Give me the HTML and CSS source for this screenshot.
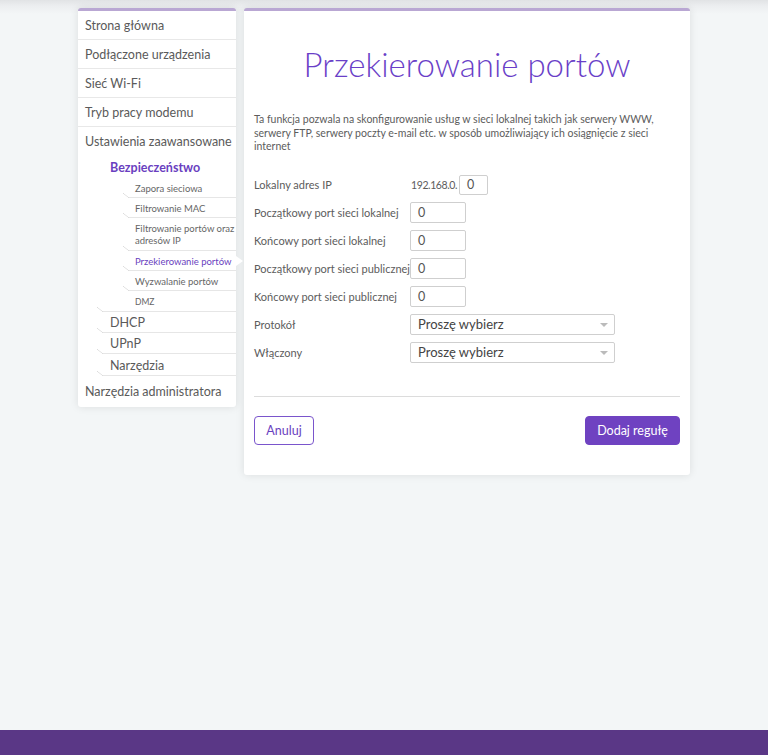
FILE: index.html
```html
<!DOCTYPE html>
<html lang="pl">
<head>
<meta charset="utf-8">
<title>Przekierowanie portów</title>
<link rel="stylesheet" href="styles.css">
</head>
<body>
<div class="page">
  <div class="layout">
    <nav class="sidebar">
      <ul class="nav">
        <li class="top">Strona główna</li>
        <li class="top">Podłączone urządzenia</li>
        <li class="top">Sieć Wi-Fi</li>
        <li class="top">Tryb pracy modemu</li>
        <li class="top noline">Ustawienia zaawansowane</li>
        <li class="sec">Bezpieczeństwo</li>
        <li class="sub">Zapora sieciowa</li>
        <li class="sub">Filtrowanie MAC</li>
        <li class="sub two">Filtrowanie portów oraz<br>adresów IP</li>
        <li class="sub active">Przekierowanie portów</li>
        <li class="sub">Wyzwalanie portów</li>
        <li class="sub dmz">DMZ</li>
        <li class="mid">DHCP</li>
        <li class="mid">UPnP</li>
        <li class="mid tall">Narzędzia</li>
        <li class="top noline last">Narzędzia administratora</li>
      </ul>
    </nav>
    <main class="card">
      <h1 class="title">Przekierowanie portów</h1>
      <p class="desc">Ta funkcja pozwala na skonfigurowanie usług w sieci lokalnej takich jak serwery WWW, serwery FTP, serwery poczty e-mail etc. w sposób umożliwiający ich osiągnięcie z sieci internet</p>
      <div class="form">
        <label class="lbl">Lokalny adres IP</label>
        <div class="ctl"><span class="prefix">192.168.0.</span><span class="inp tiny">0</span></div>
        <label class="lbl">Początkowy port sieci lokalnej</label>
        <div class="ctl"><span class="inp">0</span></div>
        <label class="lbl">Końcowy port sieci lokalnej</label>
        <div class="ctl"><span class="inp">0</span></div>
        <label class="lbl">Początkowy port sieci publicznej</label>
        <div class="ctl"><span class="inp">0</span></div>
        <label class="lbl">Końcowy port sieci publicznej</label>
        <div class="ctl"><span class="inp">0</span></div>
        <label class="lbl">Protokół</label>
        <div class="ctl"><span class="sel">Proszę wybierz<i class="caret"></i></span></div>
        <label class="lbl">Włączony</label>
        <div class="ctl"><span class="sel">Proszę wybierz<i class="caret"></i></span></div>
      </div>
      <hr class="divider">
      <div class="actions">
        <button class="btn ghost">Anuluj</button>
        <button class="btn primary">Dodaj regułę</button>
      </div>
    </main>
  </div>
  <footer class="footer"></footer>
</div>
</body>
</html>
```
FILE: styles.css
```css
* { box-sizing: border-box; }
html, body { margin: 0; padding: 0; }
body {
  font-family: Lato, "Noto Sans", "DejaVu Sans", sans-serif;
  color: #555;
  background: #f3f6f7;
}
.page {
  height: 755px;
  display: flex;
  flex-direction: column;
  background: linear-gradient(#e1e3e5 0px, #eceef0 6px, #f3f6f7 14px);
}
.layout {
  flex: 1;
  display: flex;
  align-items: flex-start;
  gap: 8px;
  padding: 8px 0 0 78px;
}
.sidebar {
  width: 158px;
  background: #fff;
  border-top: 3px solid #b9a7d3;
  border-radius: 3px;
  box-shadow: 0 0 8px rgba(0,0,0,0.10);
  position: relative;
}
.nav { list-style: none; margin: 0; padding: 0; }
.nav li { position: relative; white-space: nowrap; }
.top {
  font-size: 12.5px;
  line-height: 16px;
  padding: 7px 6px 5px 7px;
  border-bottom: 1px solid #e8e8e8;
  color: #5a5a5a;
}
.top.noline { border-bottom: none; padding-bottom: 5px; }
.top.last { padding-top: 8px; padding-bottom: 7px; }
.sec {
  font-size: 12.5px;
  line-height: 16px;
  padding: 5px 0 2px 32px;
  color: #6a3fc0;
  font-weight: 700;
}
.sub {
  font-size: 9.5px;
  line-height: 12px;
  padding: 5px 0 2px 6px;
  margin-left: 51px;
  border-bottom: 1px solid #e6e6e6;
  color: #666;
}
.sub.two { padding-bottom: 3px; }
.sub::before, .mid::before {
  content: "";
  position: absolute;
  left: -6px;
  bottom: -1px;
  width: 6px;
  height: 5px;
  background: linear-gradient(to top right, transparent calc(50% - 0.6px), #d8d8d8 50%, transparent calc(50% + 0.6px));
}
.sub.active { color: #6a3fc0; }
.sub.active::after {
  content: "";
  position: absolute;
  right: -7px;
  top: 5px;
  border-left: 7px solid #fff;
  border-top: 5px solid transparent;
  border-bottom: 5px solid transparent;
}
.sub.dmz {
  font-size: 8.5px;
  margin-left: 25px;
  padding-left: 32px;
  padding-top: 5px;
  padding-bottom: 3px;
}
.mid {
  font-size: 12.5px;
  line-height: 16px;
  padding: 3px 0 1px 7px;
  margin-left: 25px;
  border-bottom: 1px solid #e6e6e6;
  color: #5a5a5a;
}
.mid.tall { padding-top: 4px; }
.card {
  width: 446px;
  background: #fff;
  border-top: 3px solid #b9a7d3;
  border-radius: 3px;
  box-shadow: 0 0 8px rgba(0,0,0,0.10);
  padding: 0 10px 30px;
}
.title {
  margin: 33px 0 0;
  text-align: center;
  font-size: 33px;
  line-height: 40px;
  font-weight: 300;
  color: #6a3fc8;
}
.desc {
  margin: 29px 0 0;
  font-size: 10.5px;
  line-height: 13.5px;
  color: #5c5c5c;
}
.form {
  margin-top: 21px;
  display: grid;
  grid-template-columns: 156px 1fr;
  row-gap: 7px;
  align-items: center;
}
.lbl { font-size: 11px; color: #5c5c5c; }
.ctl { display: flex; align-items: center; }
.prefix { font-size: 10.5px; letter-spacing: -0.4px; color: #5c5c5c; margin-right: 2px; padding-left: 1px; }
.inp {
  display: block;
  width: 56px;
  height: 21px;
  border: 1px solid #cfcfcf;
  border-radius: 2px;
  font-size: 12.5px;
  line-height: 19px;
  padding-left: 7px;
  color: #555;
}
.inp.tiny { width: 29px; height: 20px; line-height: 18px; }
.sel {
  position: relative;
  display: block;
  width: 205px;
  height: 21px;
  border: 1px solid #cfcfcf;
  border-radius: 2px;
  font-size: 13px;
  line-height: 19px;
  padding-left: 7px;
  color: #444;
}
.caret {
  position: absolute;
  right: 6px;
  top: 8px;
  border-top: 4px solid #bbb;
  border-left: 4px solid transparent;
  border-right: 4px solid transparent;
}
.divider {
  margin: 33px 0 0;
  border: none;
  border-top: 1px solid #dcdcdc;
}
.actions {
  margin-top: 19px;
  display: flex;
  justify-content: space-between;
}
.btn {
  font-family: inherit;
  font-size: 12.5px;
  height: 29px;
  border-radius: 4px;
  cursor: pointer;
}
.ghost {
  width: 60px;
  background: #fff;
  border: 1px solid #7a55cc;
  color: #6a3fc0;
}
.primary {
  width: 95px;
  background: #6f42c1;
  border: 1px solid #6f42c1;
  color: #fff;
}
.footer {
  height: 25px;
  background: #5a3786;
}
```
